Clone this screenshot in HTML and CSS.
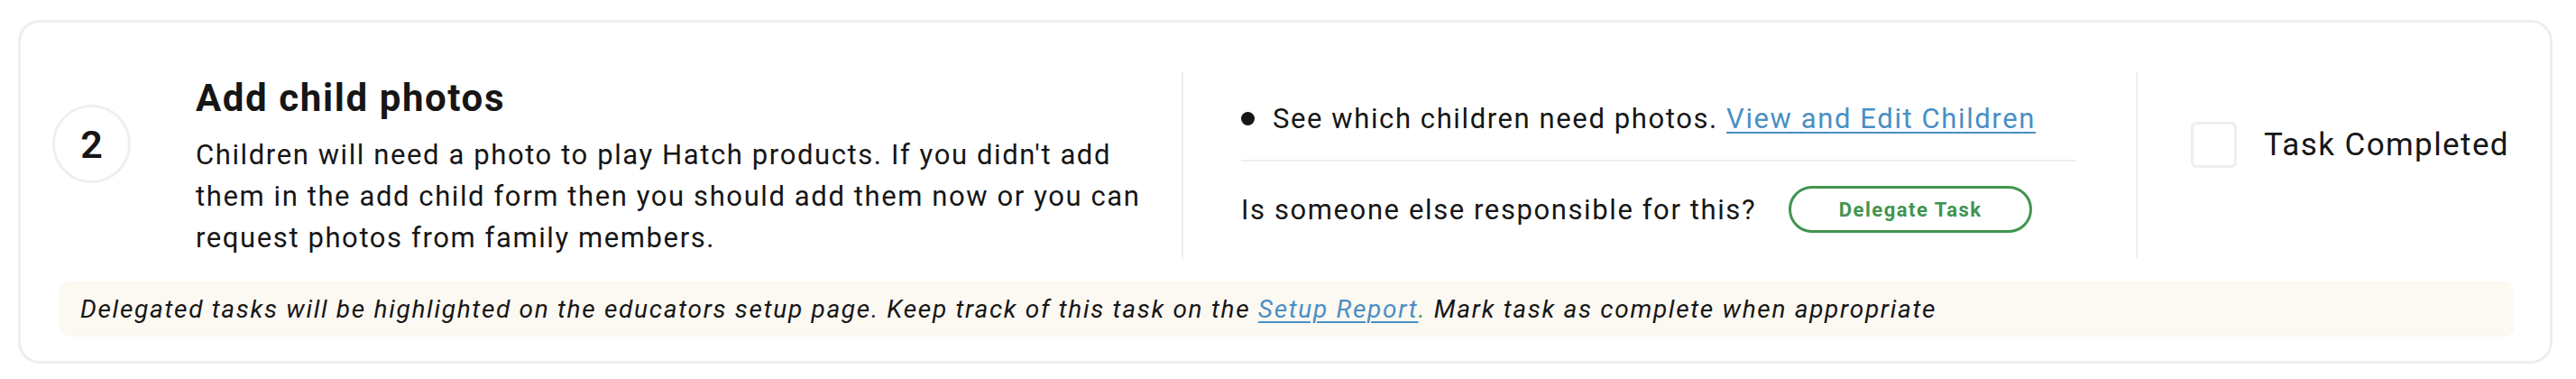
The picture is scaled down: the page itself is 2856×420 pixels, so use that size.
FILE: index.html
```html
<!DOCTYPE html>
<html lang="en">
<head>
    <meta charset="UTF-8">
    <meta name="viewport" content="width=device-width, initial-scale=1.0">
    <title>Setup tasks</title>
    <link rel="stylesheet" href="styles.css">
</head>
<body>
    <div class="task-card">
        <div class="task-row">
            <div class="step-num">2</div>

            <div class="task-info">
                <h2>Add child photos</h2>
                <p>Children will need a photo to play Hatch products. If you didn't add them in the add child form then you should add them now or you can request photos from family members.</p>
            </div>

            <div class="task-actions">
                <ul class="checklist">
                    <li>See which children need photos. <a href="#">View and Edit Children</a></li>
                </ul>
                <div class="delegate">
                    <span>Is someone else responsible for this?</span>
                    <button type="button" class="btn-delegate">Delegate Task</button>
                </div>
            </div>

            <label class="task-complete">
                <span class="checkbox"></span>
                <span>Task Completed</span>
            </label>
        </div>

        <div class="task-note">
            Delegated tasks will be highlighted on the educators setup page. Keep track of this task on the <a href="#">Setup Report</a><span class="dot">.</span> Mark task as complete when appropriate
        </div>
    </div>
</body>
</html>
```

FILE: styles.css
```css
* {
    margin: 0;
    padding: 0;
    box-sizing: border-box;
}

body {
    font-family: Roboto, "Liberation Sans", Arial, sans-serif;
    background-color: #fff;
    color: #161616;
}

.task-card {
    margin: 22px 26px 18px 20px;
    border: 3px solid #eeeeee;
    border-radius: 24px;
    padding: 55px 40px 27px 35px;
}

.task-row {
    display: flex;
    align-items: stretch;
}

.step-num {
    flex: 0 0 87px;
    height: 87px;
    margin-top: 36px;
    margin-right: 72px;
    border: 3px solid #efefef;
    border-radius: 50%;
    display: flex;
    justify-content: center;
    align-items: center;
    font-size: 43px;
    font-weight: 600;
}

.task-info {
    flex: 0 0 1093px;
    padding-right: 30px;
}

.task-info h2 {
    margin-top: 4px;
    font-size: 42px;
    line-height: 50px;
    font-weight: 700;
    letter-spacing: 1.6px;
}

.task-info p {
    margin-top: 15px;
    font-size: 31px;
    line-height: 46px;
    letter-spacing: 1.6px;
}

.task-actions {
    flex: 0 0 1060px;
    border-left: 2px solid #eeeeee;
    border-right: 2px solid #eeeeee;
    padding: 0 66px 0 64px;
    display: flex;
    flex-direction: column;
    justify-content: center;
    font-size: 31px;
    letter-spacing: 1.6px;
}

.checklist {
    list-style: none;
    padding-bottom: 22px;
    border-bottom: 2px solid #eeeeee;
}

.checklist li {
    line-height: 46px;
    white-space: nowrap;
}

.checklist li::before {
    content: "";
    display: inline-block;
    vertical-align: middle;
    width: 15px;
    height: 15px;
    border-radius: 50%;
    background-color: #161616;
    margin: -4px 20px 0 0;
}

a {
    color: #4a8fc4;
    text-decoration: underline;
    text-decoration-thickness: 2px;
    text-underline-offset: 4px;
}

.delegate {
    margin-top: 27px;
    display: flex;
    align-items: center;
    gap: 36px;
    white-space: nowrap;
}

.btn-delegate {
    flex: 0 0 270px;
    height: 52px;
    background-color: #fff;
    border: 3px solid #41944f;
    border-radius: 26px;
    color: #41944f;
    font-family: inherit;
    font-size: 22px;
    font-weight: 700;
    letter-spacing: 1.5px;
    cursor: pointer;
}

.btn-delegate:hover {
    background-color: #f3faf4;
}

.task-complete {
    flex: 1;
    display: flex;
    align-items: center;
    align-self: flex-start;
    margin-top: 55px;
    padding-left: 59px;
    gap: 30px;
    font-size: 35px;
    letter-spacing: 1.4px;
    white-space: nowrap;
    cursor: pointer;
}

.checkbox {
    flex: 0 0 51px;
    height: 51px;
    border: 3px solid #eeeeee;
    border-radius: 6px;
}

.task-note {
    margin: 25px 0 0 8px;
    background-color: #fcf8f2;
    border-radius: 10px;
    padding: 0 23px;
    line-height: 61px;
    font-size: 28px;
    font-style: italic;
    letter-spacing: 1.7px;
    white-space: nowrap;
}

.task-note .dot {
    color: #41944f;
}
```
